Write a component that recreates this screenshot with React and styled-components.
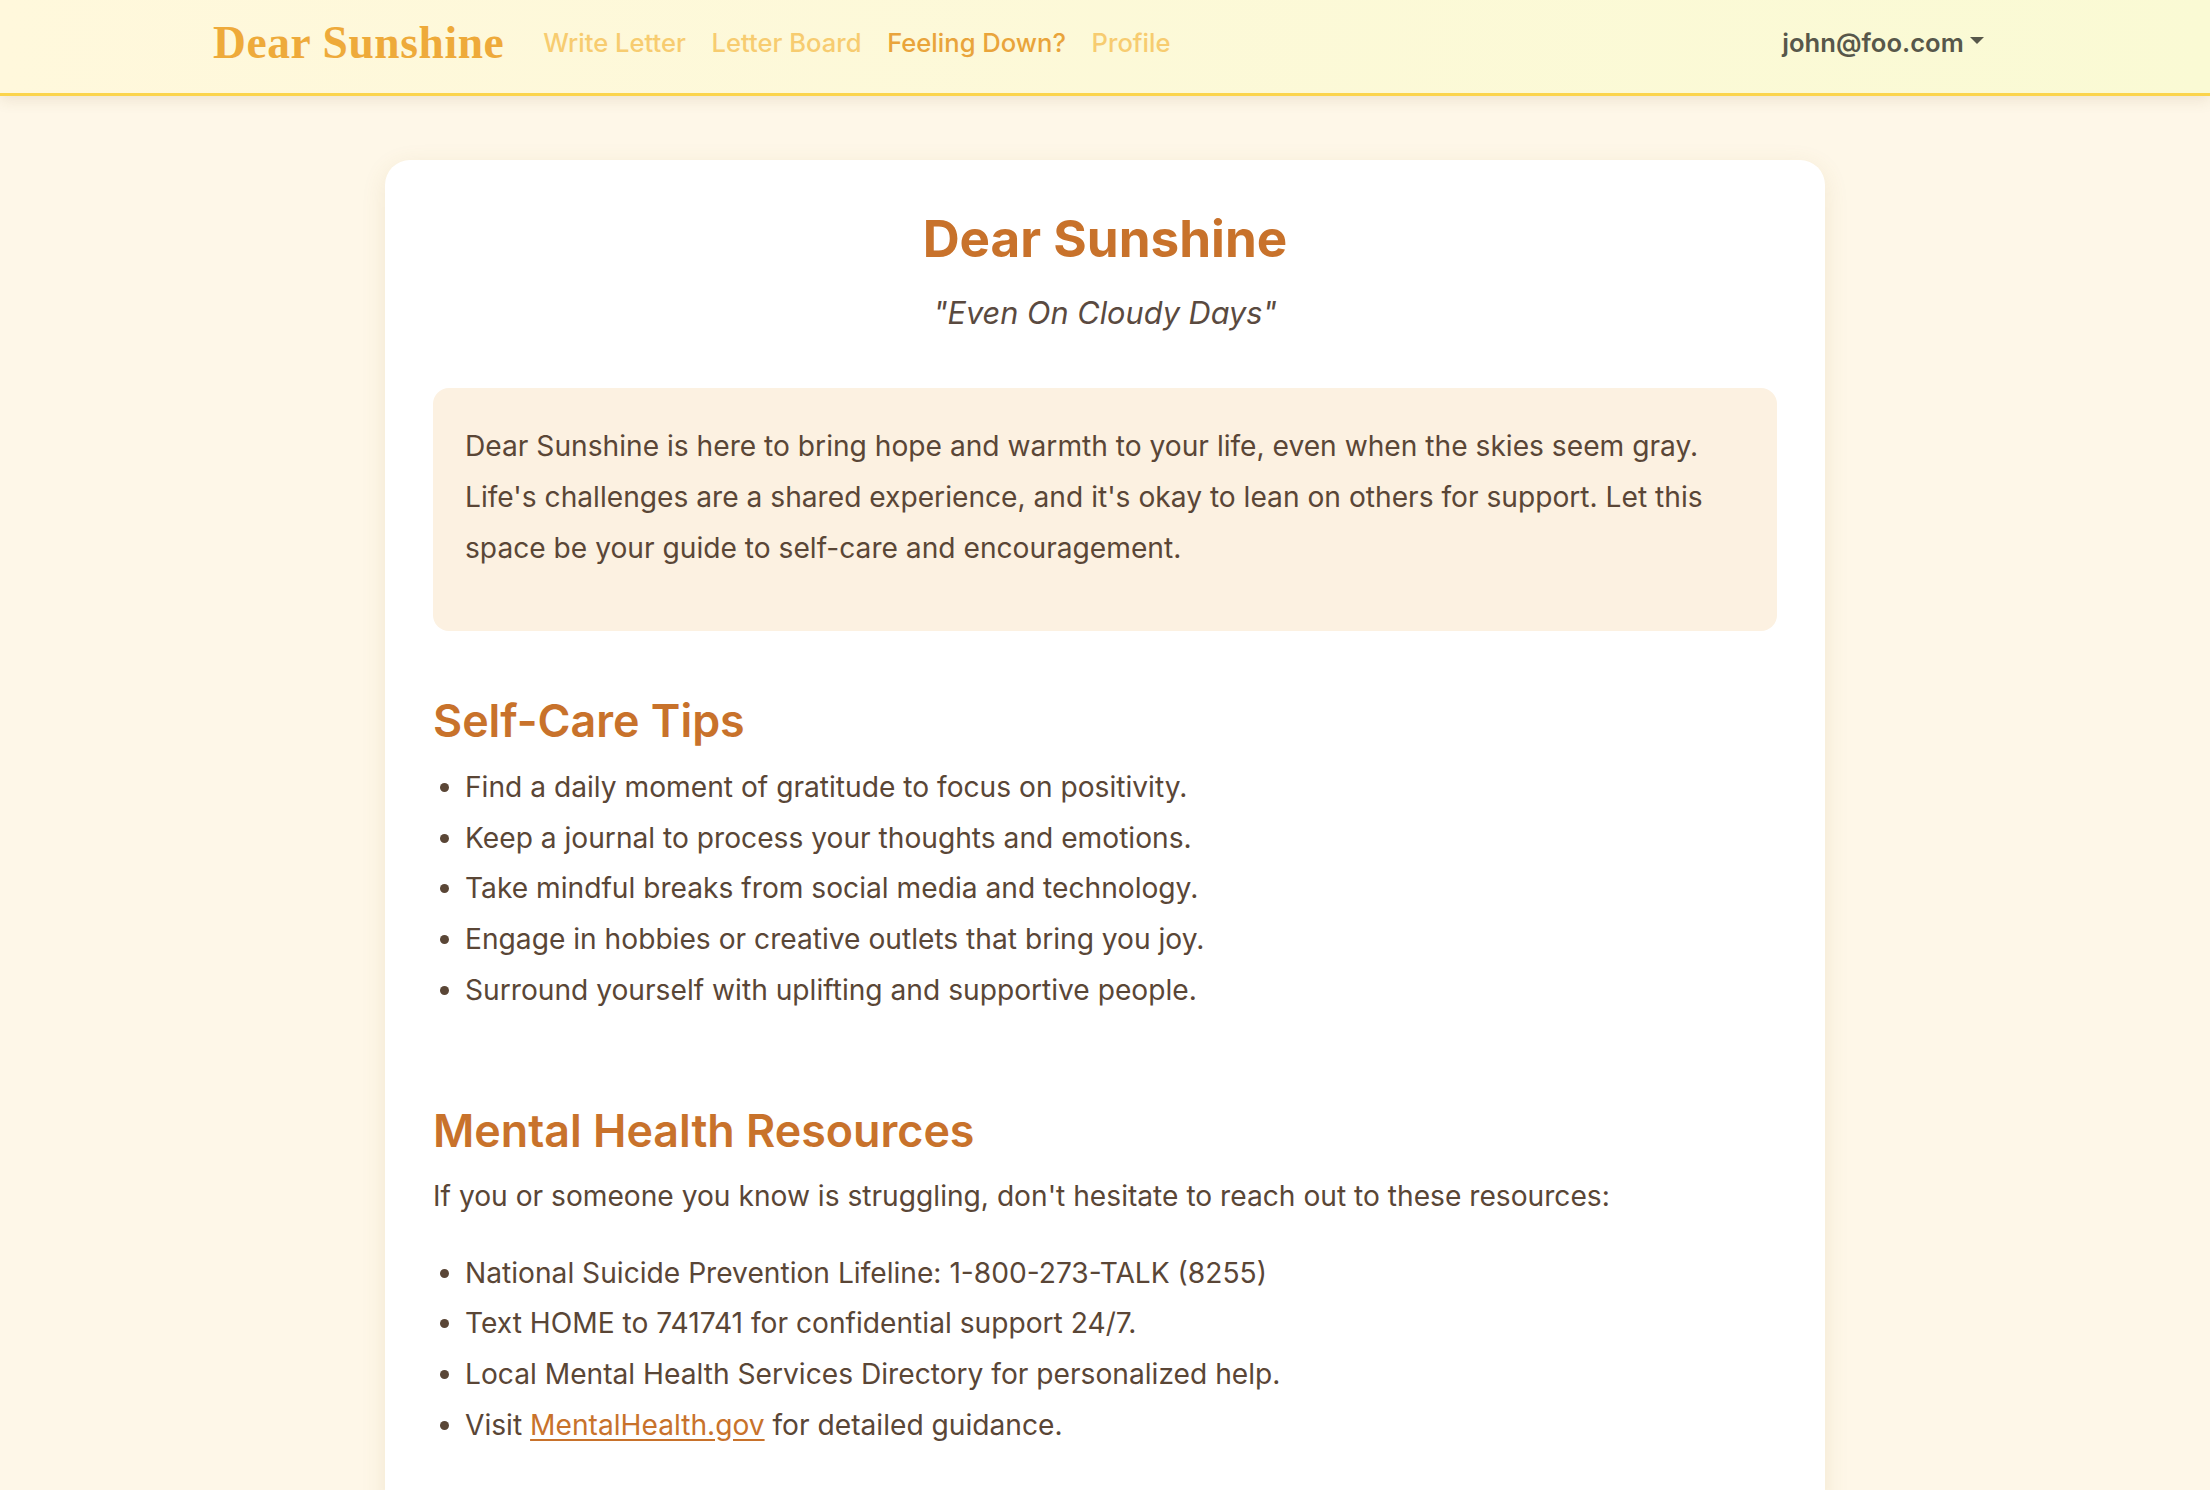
import React from 'react';
import styled, { createGlobalStyle } from 'styled-components';

const GlobalStyle = createGlobalStyle`
  html, body {
    margin : 0;
    padding : 0;
    background : #fef7e8;
    font-family : Inter, "Noto Sans", "Liberation Sans", sans-serif;
    color : #5a4636;
  }
  * {
    box-sizing : border-box;
  }
`;

const tips = [
  'Find a daily moment of gratitude to focus on positivity.',
  'Keep a journal to process your thoughts and emotions.',
  'Take mindful breaks from social media and technology.',
  'Engage in hobbies or creative outlets that bring you joy.',
  'Surround yourself with uplifting and supportive people.',
];

const navLinks = [
  { label : 'Write Letter' },
  { label : 'Letter Board' },
  { label : 'Feeling Down?', active : true },
  { label : 'Profile' },
];

const App = () => {
  return (
    <>
      <GlobalStyle />
      <Navbar>
        <NavInner>
          <Brand href="#">Dear Sunshine</Brand>
          <NavList>
            {navLinks.map((l) => (
              <NavLink key={l.label} href="#" $active={l.active}>{l.label}</NavLink>
            ))}
          </NavList>
          <UserToggle href="#">john@foo.com</UserToggle>
        </NavInner>
      </Navbar>

      <Main>
        <Card>
          <Title>Dear Sunshine</Title>
          <Tagline>"Even On Cloudy Days"</Tagline>

          <Intro>
            <p>
              Dear Sunshine is here to bring hope and warmth to your life, even when the skies seem gray.
              Life's challenges are a shared experience, and it's okay to lean on others for support. Let this
              space be your guide to self-care and encouragement.
            </p>
          </Intro>

          <Section>
            <SectionTitle>Self-Care Tips</SectionTitle>
            <List>
              {tips.map((t) => <li key={t}>{t}</li>)}
            </List>
          </Section>

          <Section>
            <SectionTitle>Mental Health Resources</SectionTitle>
            <Text>If you or someone you know is struggling, don't hesitate to reach out to these resources:</Text>
            <List>
              <li>National Suicide Prevention Lifeline: 1-800-273-TALK (8255)</li>
              <li>Text HOME to 741741 for confidential support 24/7.</li>
              <li>Local Mental Health Services Directory for personalized help.</li>
              <li>Visit <Link href="#">MentalHealth.gov</Link> for detailed guidance.</li>
            </List>
          </Section>
        </Card>
      </Main>
    </>
  );
};

const Navbar = styled.nav`
  background : linear-gradient(90deg, #fff8dc 0%, #fafad4 100%);
  border-bottom : 3px solid #fbd44c;
  box-shadow : 0 4px 14px rgba(120, 90, 40, 0.12);
  height : 96px;
  padding-bottom : 7px;
`;

const NavInner = styled.div`
  max-width : 1810px;
  margin : 0 auto;
  padding : 0 13px;
  height : 100%;
  display : flex;
  align-items : center;
`;

const Brand = styled.a`
  font-family : "Liberation Serif", "DejaVu Serif", serif;
  font-weight : bold;
  font-size : 45.5px;
  letter-spacing : 0.6px;
  color : #eeaa3a;
  text-decoration : none;
  margin-right : 26px;
  line-height : 1;
`;

const NavList = styled.div`
  display : flex;
  align-items : center;
  flex : 1;
`;

const NavLink = styled.a`
  font-size : 25.6px;
  font-weight : 500;
  padding : 0 12.8px;
  line-height : 1.5;
  color : ${(p) => (p.$active ? '#e9a43b' : '#f7cc70')};
  text-decoration : none;
`;

const UserToggle = styled.a`
  font-size : 25.6px;
  font-weight : 600;
  color : #57574a;
  text-decoration : none;
  padding : 0 12.8px;
  line-height : 1.5;
  display : flex;
  align-items : center;

  &::after {
    content : '';
    display : inline-block;
    margin-left : 0.255em;
    border-top : 0.3em solid;
    border-right : 0.3em solid transparent;
    border-left : 0.3em solid transparent;
    border-bottom : 0;
    transform : translateY(-2px);
  }
`;

const Main = styled.main`
  padding : 64px 0 64px;
`;

const Card = styled.div`
  width : 1440px;
  margin : 0 auto;
  background : #ffffff;
  border-radius : 25px;
  padding : 48px;
  box-shadow : 0 6px 24px rgba(160, 120, 50, 0.12);
`;

const Title = styled.h1`
  margin : 0 0 20px;
  text-align : center;
  font-size : 51.2px;
  font-weight : 700;
  line-height : 1.2;
  color : #c8722b;
`;

const Tagline = styled.p`
  margin : 0 0 51px;
  text-align : center;
  font-size : 30.7px;
  font-style : italic;
  line-height : 1.56;
  color : #5a4a40;
`;

const Intro = styled.div`
  background : #fcf1e1;
  border-radius : 16px;
  padding : 33px 32px 32px;

  p {
    margin : 0 0 26px;
    font-size : 28.16px;
    line-height : 1.8;
  }
`;

const Section = styled.section`
  display : flow-root;
  margin-top : 64px;
`;

const SectionTitle = styled.h2`
  margin : 0 0 12.8px;
  font-size : 44.8px;
  font-weight : 600;
  line-height : 1.2;
  color : #c8722b;
`;

const Text = styled.p`
  margin : 0 0 25.6px;
  font-size : 28.16px;
  line-height : 1.8;
`;

const List = styled.ul`
  margin : 0 0 25.6px;
  padding-left : 32px;
  font-size : 28.16px;
  line-height : 1.8;
`;

const Link = styled.a`
  color : #c8722b;
  text-decoration : underline;
  text-underline-offset : 4px;
`;

export default App;
